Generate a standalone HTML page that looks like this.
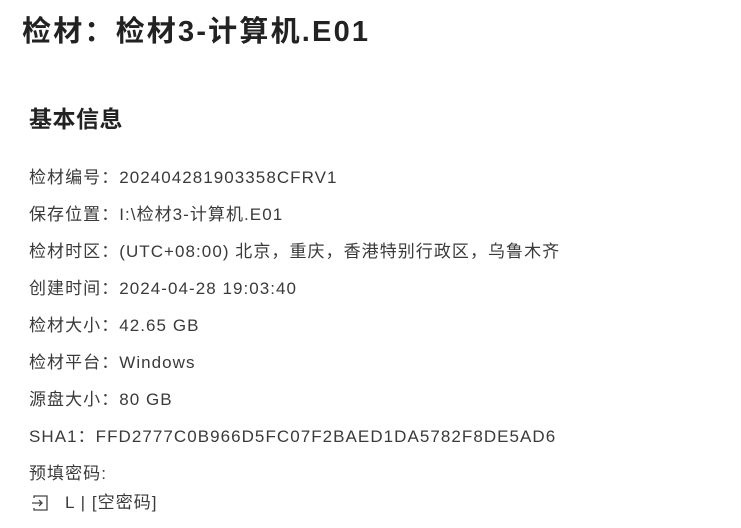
<!DOCTYPE html>
<html><head><meta charset="utf-8"><style>
body{margin:0;background:#fff;font-family:"Liberation Sans","Noto Sans CJK SC",sans-serif;color:#333;width:741px;height:528px;overflow:hidden;position:relative}
h1{position:absolute;left:22px;top:12px;margin:0;font-size:29px;font-weight:bold;color:#222;line-height:40px;white-space:nowrap;letter-spacing:2.2px}
h2{position:absolute;left:29px;top:103px;margin:0;font-size:23px;font-weight:bold;color:#222;line-height:32px;letter-spacing:0.5px}
.r{position:absolute;left:29px;font-size:17px;line-height:24px;white-space:nowrap;color:#3a3a3a;letter-spacing:1.05px}
svg{position:absolute}
</style></head><body>
<h1>检材：检材3-计算机.E01</h1>
<h2>基本信息</h2>
<div class="r" style="top:166px">检材编号：202404281903358CFRV1</div>
<div class="r" style="top:203px">保存位置：I:\检材3-计算机.E01</div>
<div class="r" style="top:240px">检材时区：(UTC+08:00) 北京，重庆，香港特别行政区，乌鲁木齐</div>
<div class="r" style="top:277px">创建时间：2024-04-28 19:03:40</div>
<div class="r" style="top:314px">检材大小：42.65 GB</div>
<div class="r" style="top:351px">检材平台：Windows</div>
<div class="r" style="top:388px">源盘大小：80 GB</div>
<div class="r" style="top:425px">SHA1：FFD2777C0B966D5FC07F2BAED1DA5782F8DE5AD6</div>
<div class="r" style="top:462px">预填密码:</div>
<svg style="left:31px;top:494px" width="18" height="18" viewBox="0 0 18 18" fill="none" stroke="#444" stroke-width="1.3"><path d="M3 4V2h13v14H3v-2"/><path d="M1 9h10M8 6l3 3-3 3"/></svg>
<div class="r" style="top:491px;left:65px">L | [空密码]</div>
</body></html>
